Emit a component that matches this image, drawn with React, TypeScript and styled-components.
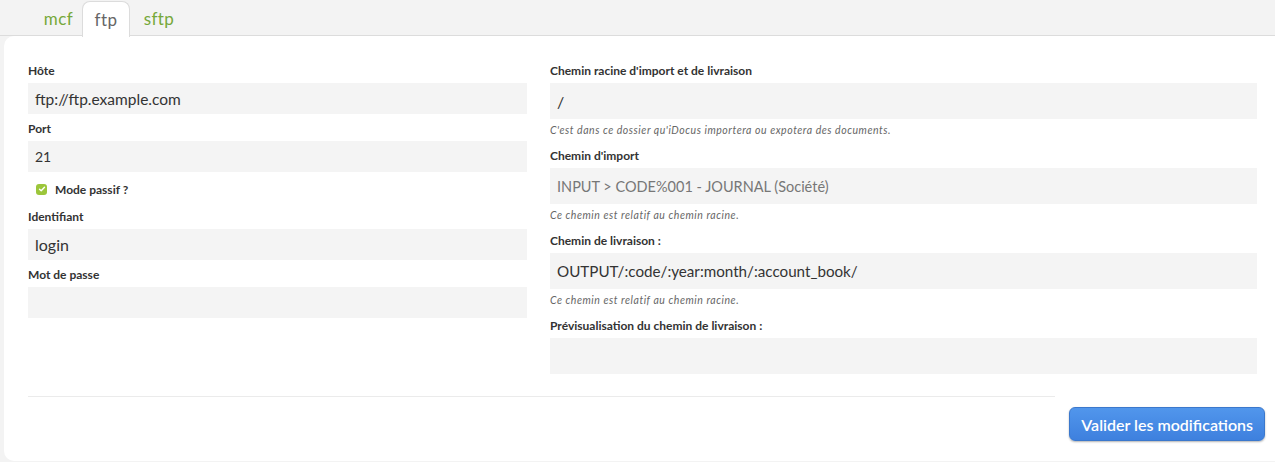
import styled, { createGlobalStyle } from "styled-components";

const GlobalStyle = createGlobalStyle`
  html, body {
    margin: 0;
    padding: 0;
    background: #f3f3f3;
    font-family: "Lato", "Open Sans", sans-serif;
    color: #333;
  }
`;

const tabs = [
  { name: "mcf", width: 47 },
  { name: "ftp", width: 48 },
  { name: "sftp", width: 58 },
];

export default function App() {
  return (
    <>
      <GlobalStyle />
      <Page>
        <TabBar>
          {tabs.map((t) => (
            <Tab key={t.name} $active={t.name === "ftp"} $width={t.width}>
              {t.name}
            </Tab>
          ))}
        </TabBar>
        <Panel>
          <Columns>
            <Column>
              <Group>
                <Label>Hôte</Label>
                <Input $size={15.5}>ftp://ftp.example.com</Input>
              </Group>
              <Group>
                <Label>Port</Label>
                <Input $size={14}>21</Input>
              </Group>
              <CheckRow>
                <CheckBox>
                  <svg width="8" height="8" viewBox="0 0 8 8">
                    <path
                      d="M1.5 4.2 L3.2 5.8 L6.5 2.3"
                      fill="none"
                      stroke="#fff"
                      strokeWidth="1.4"
                      strokeLinecap="round"
                      strokeLinejoin="round"
                    />
                  </svg>
                </CheckBox>
                <CheckLabel>Mode passif ?</CheckLabel>
              </CheckRow>
              <Group>
                <Label>Identifiant</Label>
                <Input $size={16}>login</Input>
              </Group>
              <Group>
                <Label>Mot de passe</Label>
                <Input $size={16} />
              </Group>
            </Column>
            <Column>
              <Group $wide>
                <Label>Chemin racine d'import et de livraison</Label>
                <Input $size={16} $tall>/</Input>
                <Help>C'est dans ce dossier qu'iDocus importera ou expotera des documents.</Help>
              </Group>
              <Group $wide>
                <Label>Chemin d'import</Label>
                <Input $size={14.5} $tall $muted>
                  INPUT &gt; CODE%001 - JOURNAL (Société)
                </Input>
                <Help>Ce chemin est relatif au chemin racine.</Help>
              </Group>
              <Group $wide>
                <Label>Chemin de livraison :</Label>
                <Input $size={15.2} $tall>OUTPUT/:code/:year:month/:account_book/</Input>
                <Help>Ce chemin est relatif au chemin racine.</Help>
              </Group>
              <Group $wide>
                <Label>Prévisualisation du chemin de livraison :</Label>
                <Input $size={16} $tall />
              </Group>
            </Column>
          </Columns>
          <Divider />
          <Footer>
            <SubmitButton>Valider les modifications</SubmitButton>
          </Footer>
        </Panel>
      </Page>
    </>
  );
}

const Page = styled.div`
  width: 1275px;
  height: 462px;
  overflow: hidden;
`;

const TabBar = styled.div`
  display: flex;
  height: 36px;
  padding-left: 35px;
  border-bottom: 1px solid #dcdcdc;
  box-sizing: border-box;
`;

const Tab = styled.div<{ $active?: boolean; $width: number }>`
  display: flex;
  align-items: center;
  justify-content: center;
  width: ${(p) => p.$width}px;
  height: 36px;
  box-sizing: border-box;
  font-size: 17px;
  letter-spacing: 0.4px;
  color: ${(p) => (p.$active ? "#666" : "#76a83a")};
  background: ${(p) => (p.$active ? "#fff" : "transparent")};
  border: 1px solid ${(p) => (p.$active ? "#dcdcdc" : "transparent")};
  border-bottom: none;
  border-radius: 8px 8px 0 0;
  position: relative;
  top: ${(p) => (p.$active ? "1px" : "0")};
`;

const Panel = styled.div`
  margin-left: 4px;
  background: #fff;
  border-radius: 10px 0 0 10px;
  padding: 28px 18px 0 24px;
  height: 425px;
  box-sizing: border-box;
`;

const Columns = styled.div`
  display: grid;
  grid-template-columns: 499px 1fr;
  column-gap: 23px;
`;

const Column = styled.div`
  display: flex;
  flex-direction: column;
`;

const Group = styled.div<{ $wide?: boolean }>`
  display: flex;
  flex-direction: column;
  margin-bottom: ${(p) => (p.$wide ? "12px" : "8px")};
`;

const Label = styled.label`
  font-size: 12px;
  font-weight: 700;
  line-height: 14px;
  color: #333;
  margin-bottom: 5px;
`;

const Input = styled.div<{ $size: number; $tall?: boolean; $muted?: boolean }>`
  height: ${(p) => (p.$tall ? "36px" : "31px")};
  background: #f4f4f4;
  display: flex;
  align-items: center;
  padding: 0 7px;
  font-size: ${(p) => p.$size}px;
  color: ${(p) => (p.$muted ? "#777" : "#333")};
`;

const Help = styled.div`
  font-size: 10.5px;
  font-style: italic;
  letter-spacing: 0.55px;
  line-height: 13px;
  color: #666;
  margin-top: 5px;
`;

const CheckRow = styled.div`
  display: flex;
  align-items: center;
  gap: 8px;
  padding-left: 8px;
  height: 16px;
  margin: 1px 0 13px;
`;

const CheckBox = styled.span`
  width: 11px;
  height: 11px;
  border-radius: 3px;
  background: #9cc63b;
  display: flex;
  align-items: center;
  justify-content: center;
`;

const CheckLabel = styled.span`
  font-size: 12px;
  font-weight: 700;
  color: #333;
`;

const Divider = styled.hr`
  border: none;
  border-top: 1px solid #ebebeb;
  margin: 10px 202px 0 0;
`;

const Footer = styled.div`
  display: flex;
  justify-content: flex-end;
  margin-right: -8px;
  padding-top: 10px;
`;

const SubmitButton = styled.button`
  height: 34px;
  padding: 0 11px;
  border: 1px solid #3b78cc;
  border-radius: 6px;
  background: linear-gradient(#5196ec, #3e80de);
  box-shadow: 0 1px 2px rgba(0, 0, 0, 0.3);
  color: #fff;
  font-family: inherit;
  font-size: 16px;
  font-weight: 600;
`;
